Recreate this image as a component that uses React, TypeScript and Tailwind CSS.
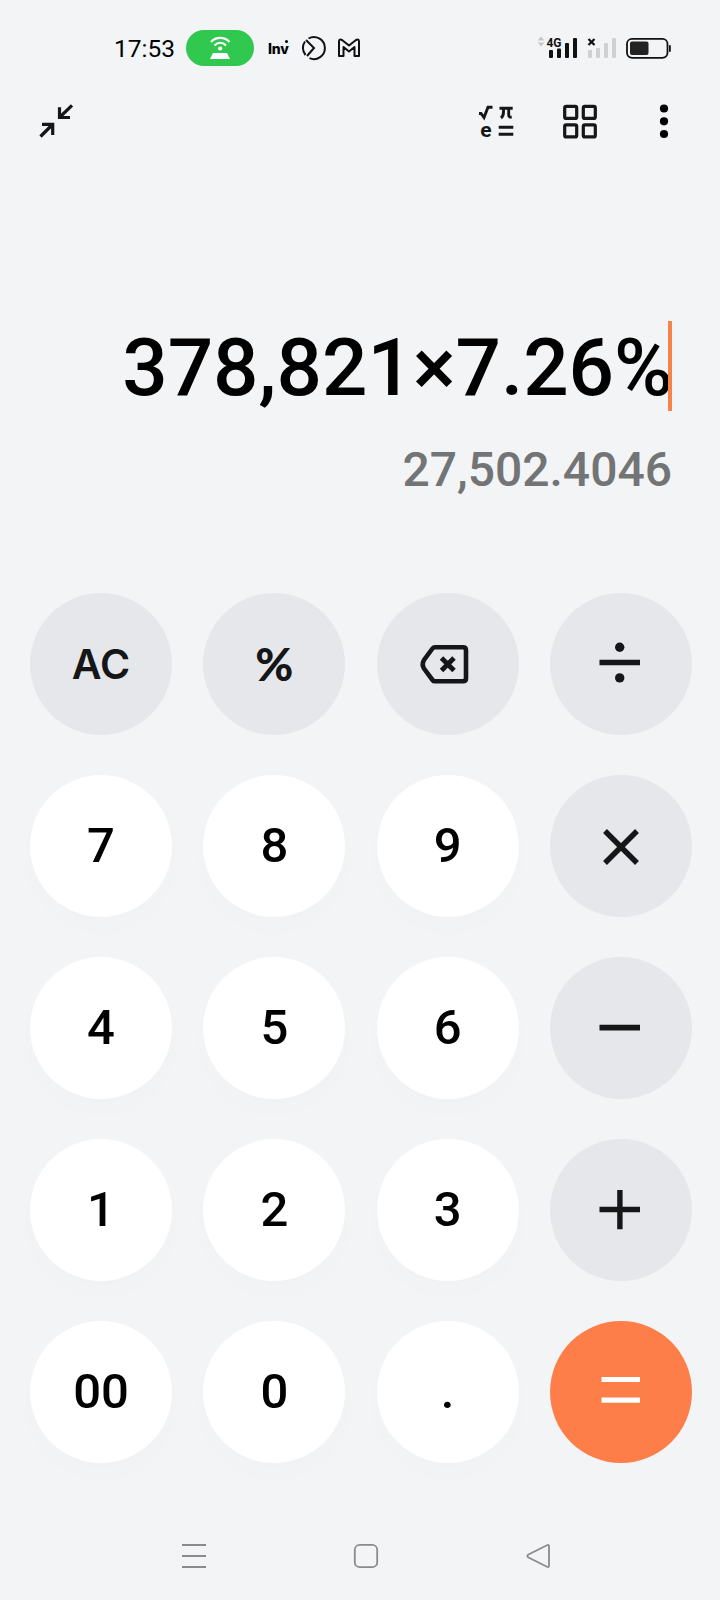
import type { ReactNode } from "react";

const ink = "#151617";

// every key drawing sits on the same 142x142 canvas as the key itself
function KeyIcon({ children }: { children: ReactNode }) {
  return (
    <svg viewBox="0 0 142 142" className="h-full w-full" fill="none" stroke={ink}>
      {children}
    </svg>
  );
}

function Key({ children, kind = "number" }: { children: ReactNode; kind?: "number" | "action" | "equals" }) {
  const colors = {
    number: "bg-white pb-[2px] text-black shadow-[0_12px_30px_rgba(0,0,0,0.010)]",
    action: "bg-[#e6e7eb] text-[#151617]",
    equals: "bg-[#fd7e48] text-white",
  };
  return (
    <button className={`flex h-[142px] w-[142px] items-center justify-center rounded-full text-[49px] font-medium leading-none ${colors[kind]}`}>
      {children}
    </button>
  );
}

function StatusBar() {
  return (
    <div className="flex h-24 items-center pl-[114px] pr-[48px]">
      <span className="w-[72px] pt-[2px] text-[24.5px] leading-none text-black">17:53</span>

      {/* Hotspot pill */}
      <div className="flex h-9 w-[68px] items-center justify-center rounded-full bg-[#30c84f]">
        <svg width="24" height="24" viewBox="0 0 24 24" fill="none" stroke="white" strokeWidth="2.200">
          <path d="M3 6C8 0.600 16.500 0.600 21.500 6" />
          <path d="M6.500 9.500C10 5.800 14.500 5.800 18 9.500" />
          <circle cx="12.200" cy="12.500" r="2.100" fill="white" stroke="none" />
          <path d="M5 17H19L22 23H2Z" fill="white" stroke="none" />
        </svg>
      </div>

      {/* Notifications */}
      <div className="relative ml-[14px] w-[33px] pt-[2px] font-[Inter] text-[14px] font-extrabold leading-none tracking-[-0.200px] text-black">
        Inv
        <span className="absolute left-[17px] top-[0px] h-[3px] w-[3px] rounded-full bg-black" />
      </div>
      <svg width="26" height="26" viewBox="0 0 26 26" fill="none" stroke="#111" strokeWidth="2">
        <path d="M7.500 3.500A11 11 0 1 1 8.500 23.200" />
        <path d="M4 6.500A11 11 0 0 0 4.500 20" />
        <path d="M5 5L13 13L6 21" />
      </svg>
      <svg className="ml-[10px]" width="24" height="22" viewBox="0 0 24 22" fill="none" stroke="#111" strokeWidth="2" strokeLinejoin="round">
        <path d="M2 19V4.500Q2 1.500 5 3L12 8.500L19 3Q22 1.500 22 4.500V19H17.500V10L12 14.500L6.500 10V19Z" />
      </svg>

      {/* Signal and battery */}
      <svg className="ml-auto" width="136" height="28" viewBox="536 34 136 28">
        <path d="M537.500 40.500L541 36.500L544.500 40.500ZM537.500 42.500L541 46.500L544.500 42.500Z" fill="#c6c7c9" />
        <text x="546.500" y="47" fontSize="13.500" fontWeight="700" fill="#111" textLength="15" lengthAdjust="spacingAndGlyphs">4G</text>
        <g fill="#111">
          <rect x="549" y="50" width="4" height="8" rx="1" />
          <rect x="557" y="48.500" width="4" height="9.500" rx="1" />
          <rect x="565" y="43" width="4" height="15" rx="1" />
          <rect x="573" y="38" width="4" height="20" rx="1" />
        </g>
        <path d="M588.500 39L594.500 45M594.500 39L588.500 45" stroke="#111" strokeWidth="2.200" />
        <g fill="#cfd0d2">
          <rect x="588" y="50" width="4" height="8" rx="1" />
          <rect x="596" y="48" width="4" height="10" rx="1" />
          <rect x="604" y="43" width="4" height="15" rx="1" />
          <rect x="612" y="38" width="4" height="20" rx="1" />
        </g>
        <rect x="627" y="38.800" width="40.500" height="19" rx="5" fill="none" stroke="#111" strokeWidth="1.800" />
        <rect x="630" y="41.500" width="18.500" height="13.500" rx="2" fill="#222" />
        <rect x="669" y="45" width="1.800" height="7" rx="0.900" fill="#111" />
      </svg>
    </div>
  );
}

function Toolbar() {
  return (
    <div className="flex h-[50px] items-center pl-[38px] pr-[46px]">
      <svg width="36" height="36" viewBox="38 103 36 36" fill="none" stroke={ink} strokeWidth="3.200">
        <path d="M59.500 107.300V117.500H70M60 117L72 105.300" />
        <path d="M42 124.300H52.700V135M52.500 124.500L40.500 136.500" />
      </svg>

      <div className="ml-auto flex items-center">
        <svg width="36" height="44" viewBox="478 99 36 44" fill="none" stroke={ink} strokeWidth="2.900">
          <path d="M479 113.500H481L484 117.500L488 107.300H492.500" />
          <path d="M499.500 108.200H512.700M503.500 108.200V112Q503.500 116 501 118M508.700 108.200V115Q508.700 117.500 511.700 117" />
          <text x="480.200" y="136.500" fontSize="21" fontWeight="700" fill={ink} stroke="none">e</text>
          <path d="M498.700 127.300H513.300M498.700 134.300H513.300" />
        </svg>
        <svg className="ml-[48px]" width="36" height="36" viewBox="562 103 36 36" fill="none" stroke={ink} strokeWidth="3.200">
          <rect x="564.700" y="106.400" width="12" height="12" rx="1.500" />
          <rect x="583.300" y="106.400" width="12" height="12" rx="1.500" />
          <rect x="564.700" y="124.900" width="12" height="12" rx="1.500" />
          <rect x="583.300" y="124.900" width="12" height="12" rx="1.500" />
        </svg>
        <svg className="ml-[56px]" width="20" height="36" viewBox="654 103 20 36" fill="#000">
          <circle cx="664" cy="108.500" r="4.100" />
          <circle cx="664" cy="121.300" r="4.100" />
          <circle cx="664" cy="134" r="4.100" />
        </svg>
      </div>
    </div>
  );
}

export default function App() {
  return (
    <div className="flex h-[1600px] w-[720px] flex-col overflow-hidden bg-[#f3f4f6] font-[Roboto,sans-serif]">
      <StatusBar />
      <Toolbar />

      {/* Display */}
      <div className="mt-[175px] flex h-[90px] items-center justify-end pr-12">
        <span className="-mr-[5px] pt-[4px] text-[80px] font-medium leading-none text-black">378,821×7.26%</span>
        <span className="z-10 h-[90px] w-1 bg-[#f5844a]" />
      </div>
      <div className="mt-[33px] flex h-[52px] items-center justify-end pr-12 text-[48px] font-medium leading-none text-[#737476]">
        27,502.4046
      </div>

      {/* Keypad */}
      <div className="mt-[97px] ml-[30px] grid w-[662px] grid-cols-[repeat(4,142px)] justify-between gap-y-10">
        <Key kind="action">
          <span className="font-[Inter] text-[41px] font-semibold">AC</span>
        </Key>
        <Key kind="action">
          <span className="font-[Lato] text-[46px] font-black">%</span>
        </Key>
        <Key kind="action">
          <KeyIcon>
            <path d="M58 54.200H86Q89 54.200 89 57.200V85.300Q89 88.300 86 88.300H58Q56.500 88.300 55.500 87L47 75.500Q44.500 71.500 47 67L55.500 55.500Q56.500 54.200 58 54.200Z" strokeWidth="4.600" />
            <path d="M64.500 65L77 77.500M77 65L64.500 77.500" strokeWidth="4.900" />
          </KeyIcon>
        </Key>
        <Key kind="action">
          <KeyIcon>
            <path d="M49.500 69.500H90" strokeWidth="5.600" />
            <circle cx="69.700" cy="54.200" r="4.700" fill={ink} stroke="none" />
            <circle cx="69.700" cy="84.900" r="4.700" fill={ink} stroke="none" />
          </KeyIcon>
        </Key>

        <Key>7</Key>
        <Key>8</Key>
        <Key>9</Key>
        <Key kind="action">
          <KeyIcon>
            <path d="M55 56L87 88M87 56L55 88" strokeWidth="5.400" />
          </KeyIcon>
        </Key>

        <Key>4</Key>
        <Key>5</Key>
        <Key>6</Key>
        <Key kind="action">
          <KeyIcon>
            <path d="M49.500 70.700H90" strokeWidth="5.800" />
          </KeyIcon>
        </Key>

        <Key>1</Key>
        <Key>2</Key>
        <Key>3</Key>
        <Key kind="action">
          <KeyIcon>
            <path d="M49.500 70.500H90M69.900 51V90.300" strokeWidth="5.400" />
          </KeyIcon>
        </Key>

        <Key>00</Key>
        <Key>0</Key>
        <Key>.</Key>
        <Key kind="equals">
          <KeyIcon>
            <path d="M51.500 58.500H90M51.500 79.200H90" stroke="white" strokeWidth="5.200" />
          </KeyIcon>
        </Key>
      </div>

      {/* System navigation */}
      <div className="mt-[79px] flex h-7 items-center justify-between pl-[180px] pr-[168px]">
        <svg width="28" height="28" viewBox="0 0 28 28" stroke="#8a8b8d" strokeWidth="1.900">
          <path d="M2 3H26M2 14H26M2 25H26" />
        </svg>
        <svg width="28" height="28" viewBox="0 0 28 28" fill="none" stroke="#8a8b8d" strokeWidth="1.800">
          <rect x="2.800" y="2.800" width="22.400" height="22.400" rx="5" />
        </svg>
        <svg width="28" height="28" viewBox="0 0 28 28" fill="none" stroke="#8a8b8d" strokeWidth="1.800">
          <path d="M23 3.200Q25 2.300 25 4.500V23.500Q25 25.700 23 24.800L4.500 15.500Q2.200 14 4.500 12.500Z" />
        </svg>
      </div>
    </div>
  );
}
